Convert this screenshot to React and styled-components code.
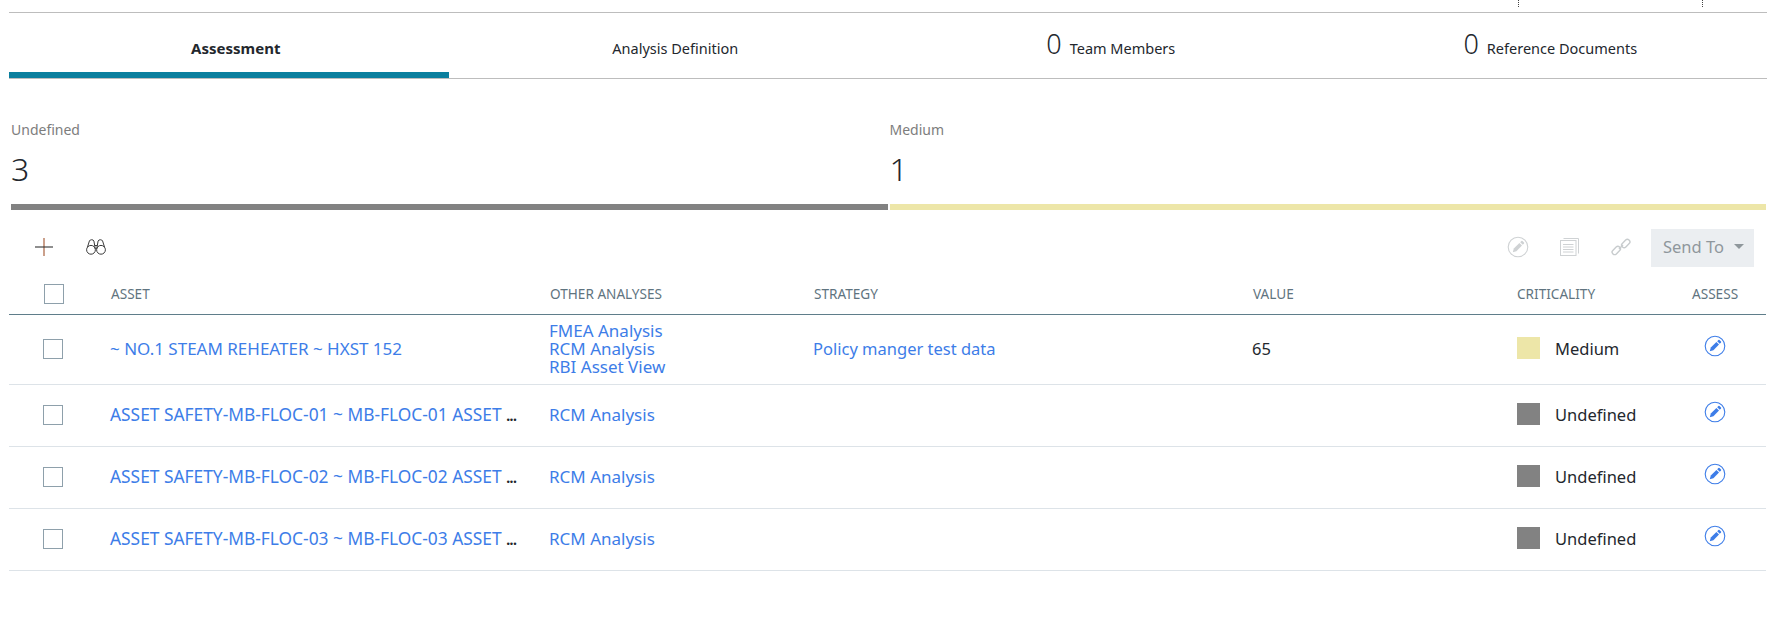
import React from "react";
import styled, { createGlobalStyle } from "styled-components";

const GlobalStyle = createGlobalStyle`
  html, body {
    margin: 0;
    padding: 0;
    background: #fff;
    font-family: "Noto Sans", "Open Sans", sans-serif;
    color: #23272d;
  }
`;

const Page = styled.div`
  width: 1775px;
  height: 622px;
  overflow: hidden;
  padding: 0 9px;
  box-sizing: border-box;
`;

const TopStrip = styled.div`
  height: 12px;
  margin-right: -1px;
  border-bottom: 1px solid #bdbdbd;
  display: flex;
  justify-content: flex-end;
  padding-right: 64px;
  gap: 183px;
`;

const Dots = styled.span`
  width: 1px;
  height: 7px;
  background-image: linear-gradient(#444 50%, transparent 50%);
  background-size: 1px 2px;
`;

const Tabs = styled.div`
  display: grid;
  grid-template-columns: repeat(4, 1fr);
  height: 65px;
  margin-right: -1px;
  border-bottom: 1px solid #bdbdbd;
`;

const Tab = styled.div`
  display: flex;
  align-items: baseline;
  justify-content: center;
  gap: 8px;
  padding: ${(p) => (p.$count ? "17px 0 0 6px" : "25px 0 0 14px")};
  box-sizing: border-box;
  font-size: ${(p) => (p.$active ? 15 : 14.5)}px;
  font-weight: ${(p) => (p.$active ? 700 : 400)};
  border-bottom: 6px solid ${(p) => (p.$active ? "#0b7f9e" : "transparent")};
`;

const TabCount = styled.span`
  font-size: 27px;
  font-weight: 300;
  line-height: 1;
`;

const Summary = styled.div`
  display: flex;
  gap: 2px;
  margin: 42px 0 0 2px;
  width: 1755px;
`;

const Segment = styled.div`
  flex: 1 0 0;
`;

const SegmentLabel = styled.div`
  font-size: 14px;
  line-height: 18px;
  color: #7d7d7d;
`;

const SegmentValue = styled.div`
  font-size: 32px;
  font-weight: 300;
  line-height: 44px;
  margin-top: 8px;
`;

const SegmentBar = styled.div`
  height: 6px;
  margin-top: 13px;
  background: ${(p) => p.$color};
`;

const Toolbar = styled.div`
  display: flex;
  align-items: center;
  height: 38px;
  margin-top: 19px;
  padding-left: 23px;
  padding-right: 12px;
`;

const ToolIcon = styled.button`
  display: flex;
  align-items: center;
  justify-content: center;
  width: 24px;
  height: 24px;
  padding: 0;
  border: 0;
  background: none;
  margin-top: -3px;
  margin-right: ${(p) => p.$gap || 0}px;
`;

const Spacer = styled.div`
  flex: 1;
`;

const SendTo = styled.button`
  display: flex;
  align-items: center;
  gap: 10px;
  height: 38px;
  width: 103px;
  padding: 0 0 3px 12px;
  box-sizing: border-box;
  border: 0;
  background: #ebeef1;
  color: #8f979c;
  font-family: inherit;
  font-size: 16.5px;
`;

const Caret = styled.span`
  width: 0;
  height: 0;
  border-left: 5px solid transparent;
  border-right: 5px solid transparent;
  border-top: 5px solid #8f979c;
`;

const columns = "101px 439px 264px 439px 265px 175px 1fr";

const HeadRow = styled.div`
  display: grid;
  grid-template-columns: ${columns};
  align-items: center;
  height: 40px;
  padding-top: 7px;
  border-bottom: 1px solid #5f7d8a;
  font-size: 13.6px;
  color: #5f7480;
`;

const HeadLabel = styled.span`
  margin-top: -2px;
  padding-left: ${(p) => (p.$flush ? 0 : 1)}px;
`;

const Row = styled.div`
  display: grid;
  grid-template-columns: ${columns};
  align-items: center;
  height: ${(p) => p.$height - 2}px;
  padding-bottom: 2px;
  border-bottom: 1px solid #dde3e8;
  font-size: 16.5px;
`;

const CheckCell = styled.div`
  padding-left: ${(p) => (p.$head ? 35 : 34)}px;
`;

const Check = styled.span`
  display: block;
  width: 20px;
  height: 20px;
  box-sizing: border-box;
  border: 1px solid #8ea0ab;
`;

const Link = styled.a`
  color: #3d7de8;
  line-height: 18px;
  font-size: ${(p) => p.$size || 16.5}px;
`;

const AnalysisLink = styled(Link)`
  display: block;
`;

const AssetCell = styled.div`
  white-space: nowrap;
`;

const More = styled.span`
  font-size: 14px;
  font-weight: 700;
  letter-spacing: -0.5px;
  color: #23272d;
`;

const Criticality = styled.div`
  display: flex;
  align-items: center;
  gap: 15px;
`;

const Swatch = styled.span`
  width: 23px;
  height: 22px;
  margin-top: -1px;
  background: ${(p) => p.$color};
`;

const AssessCell = styled.div`
  padding-left: 12px;
  display: flex;
  margin-top: -5px;
`;

const PencilCircle = ({ color, size = 22 }) => (
  <svg width={size} height={size} viewBox="0 0 22 22" fill="none">
    <circle cx="11" cy="11" r="9.8" stroke={color} strokeWidth="1.1" />
    <path d="M5.8 16.2l1-3.6 5.6-5.6 2.6 2.6-5.6 5.6z" fill={color} />
    <path d="M13.2 6.2l1.2-1.2a.8.8 0 0 1 1.1 0l1.5 1.5a.8.8 0 0 1 0 1.1l-1.2 1.2z" fill={color} />
  </svg>
);

const Plus = () => (
  <svg width="18" height="18" viewBox="0 0 18 18">
    <path d="M9 0v18" stroke="#a0522d" strokeWidth="1.1" />
    <path d="M0 9h18" stroke="#333" strokeWidth="1.1" />
  </svg>
);

const Binoculars = () => (
  <svg width="20" height="17" viewBox="0 0 20 17" fill="none" stroke="#3b3b3b" strokeWidth="1">
    <circle cx="5" cy="11.8" r="4.4" />
    <circle cx="15" cy="11.8" r="4.4" />
    <path d="M1.5 9L3.4 3C3.9 1.3 7.4 1.3 7.9 3L9.3 11" />
    <path d="M18.5 9L16.6 3C16.1 1.3 12.6 1.3 12.1 3L10.7 11" />
    <path d="M8.8 7.5h2.4" />
  </svg>
);

const Notes = () => (
  <svg width="19" height="19" viewBox="0 0 19 19" fill="none" stroke="#cfd2d4" strokeWidth="1">
    <path d="M3.5 1.5h15v15" />
    <rect x="0.5" y="3.5" width="15.5" height="15" fill="#fff" />
    <path d="M3 7.5h10.5M3 10h10.5M3 12.5h10.5M3 15h10.5" />
  </svg>
);

const ChainLink = () => (
  <svg width="20" height="20" viewBox="0 0 20 20" fill="none" stroke="#c8ccce" strokeWidth="1.4">
    <rect x="0.5" y="11" width="9.5" height="5" rx="2.4" transform="rotate(-45 5.25 13.5)" />
    <rect x="10" y="4" width="9.5" height="5" rx="2.4" transform="rotate(-45 14.75 6.5)" />
    <path d="M8 12l4-4" />
  </svg>
);

const rows = [
  {
    asset: "~ NO.1 STEAM REHEATER ~ HXST 152",
    assetSize: 17,
    analyses: ["FMEA Analysis", "RCM Analysis", "RBI Asset View"],
    strategy: "Policy manger test data",
    value: "65",
    level: "Medium",
    color: "#ede6a8",
    height: 69,
  },
  {
    asset: "ASSET SAFETY-MB-FLOC-01 ~ MB-FLOC-01 ASSET ",
    assetSize: 17.35,
    truncated: true,
    analyses: ["RCM Analysis"],
    level: "Undefined",
    color: "#828282",
    height: 61,
  },
  {
    asset: "ASSET SAFETY-MB-FLOC-02 ~ MB-FLOC-02 ASSET ",
    assetSize: 17.35,
    truncated: true,
    analyses: ["RCM Analysis"],
    level: "Undefined",
    color: "#828282",
    height: 61,
  },
  {
    asset: "ASSET SAFETY-MB-FLOC-03 ~ MB-FLOC-03 ASSET ",
    assetSize: 17.35,
    truncated: true,
    analyses: ["RCM Analysis"],
    level: "Undefined",
    color: "#828282",
    height: 61,
  },
];

export default function App() {
  return (
    <Page>
      <GlobalStyle />
      <TopStrip>
        <Dots />
        <Dots />
      </TopStrip>
      <Tabs>
        <Tab $active>Assessment</Tab>
        <Tab>Analysis Definition</Tab>
        <Tab $count>
          <TabCount>0</TabCount> Team Members
        </Tab>
        <Tab $count>
          <TabCount>0</TabCount> Reference Documents
        </Tab>
      </Tabs>
      <Summary>
        <Segment>
          <SegmentLabel>Undefined</SegmentLabel>
          <SegmentValue>3</SegmentValue>
          <SegmentBar $color="#828282" />
        </Segment>
        <Segment>
          <SegmentLabel>Medium</SegmentLabel>
          <SegmentValue>1</SegmentValue>
          <SegmentBar $color="#ede6a8" />
        </Segment>
      </Summary>
      <Toolbar>
        <ToolIcon $gap={28}>
          <Plus />
        </ToolIcon>
        <ToolIcon>
          <Binoculars />
        </ToolIcon>
        <Spacer />
        <ToolIcon $gap={27}>
          <PencilCircle color="#cfd2d4" />
        </ToolIcon>
        <ToolIcon $gap={28}>
          <Notes />
        </ToolIcon>
        <ToolIcon $gap={18}>
          <ChainLink />
        </ToolIcon>
        <SendTo>
          Send To <Caret />
        </SendTo>
      </Toolbar>
      <HeadRow>
        <CheckCell $head>
          <Check />
        </CheckCell>
        <HeadLabel>ASSET</HeadLabel>
        <HeadLabel>OTHER ANALYSES</HeadLabel>
        <HeadLabel>STRATEGY</HeadLabel>
        <HeadLabel>VALUE</HeadLabel>
        <HeadLabel $flush>CRITICALITY</HeadLabel>
        <HeadLabel $flush>ASSESS</HeadLabel>
      </HeadRow>
      {rows.map((row) => (
        <Row key={row.asset} $height={row.height}>
          <CheckCell>
            <Check />
          </CheckCell>
          <AssetCell>
            <Link $size={row.assetSize}>{row.asset}</Link>
            {row.truncated && <More>...</More>}
          </AssetCell>
          <div>
            {row.analyses.map((name) => (
              <AnalysisLink key={name} $size={17}>
                {name}
              </AnalysisLink>
            ))}
          </div>
          <div>{row.strategy && <Link>{row.strategy}</Link>}</div>
          <div>{row.value}</div>
          <Criticality>
            <Swatch $color={row.color} />
            {row.level}
          </Criticality>
          <AssessCell>
            <PencilCircle color="#3d7de8" />
          </AssessCell>
        </Row>
      ))}
    </Page>
  );
}
